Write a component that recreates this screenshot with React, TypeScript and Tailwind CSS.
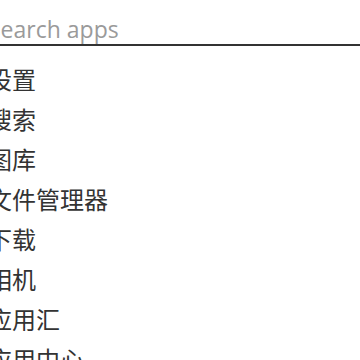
import { useState } from "react";

const APPS = ["设置", "搜索", "图库", "文件管理器", "下载", "相机", "应用汇", "应用中心"];

export default function App() {
  const [query, setQuery] = useState("");

  return (
    <div
      className="h-[360px] w-[360px] overflow-hidden bg-white"
      style={{ fontFamily: '"Open Sans", "Noto Sans CJK SC", sans-serif' }}
    >
      <div className="-ml-[12px] w-[372px]">
        <input
          value={query}
          onChange={(event) => setQuery(event.target.value)}
          placeholder="Search apps"
          className="block h-[46px] w-full border-b-2 border-[#333] bg-transparent pt-[13px] text-[23px] text-[#333] outline-none placeholder:text-[#9a9a9a]"
        />
        <ul className="pt-[13px]">
          {APPS.map((name) => (
            <li
              key={name}
              className="h-[40px] text-[24px] leading-[40px] text-[#333]"
              style={{ fontFamily: '"Noto Sans CJK SC", sans-serif' }}
            >
              {name}
            </li>
          ))}
        </ul>
      </div>
    </div>
  );
}
